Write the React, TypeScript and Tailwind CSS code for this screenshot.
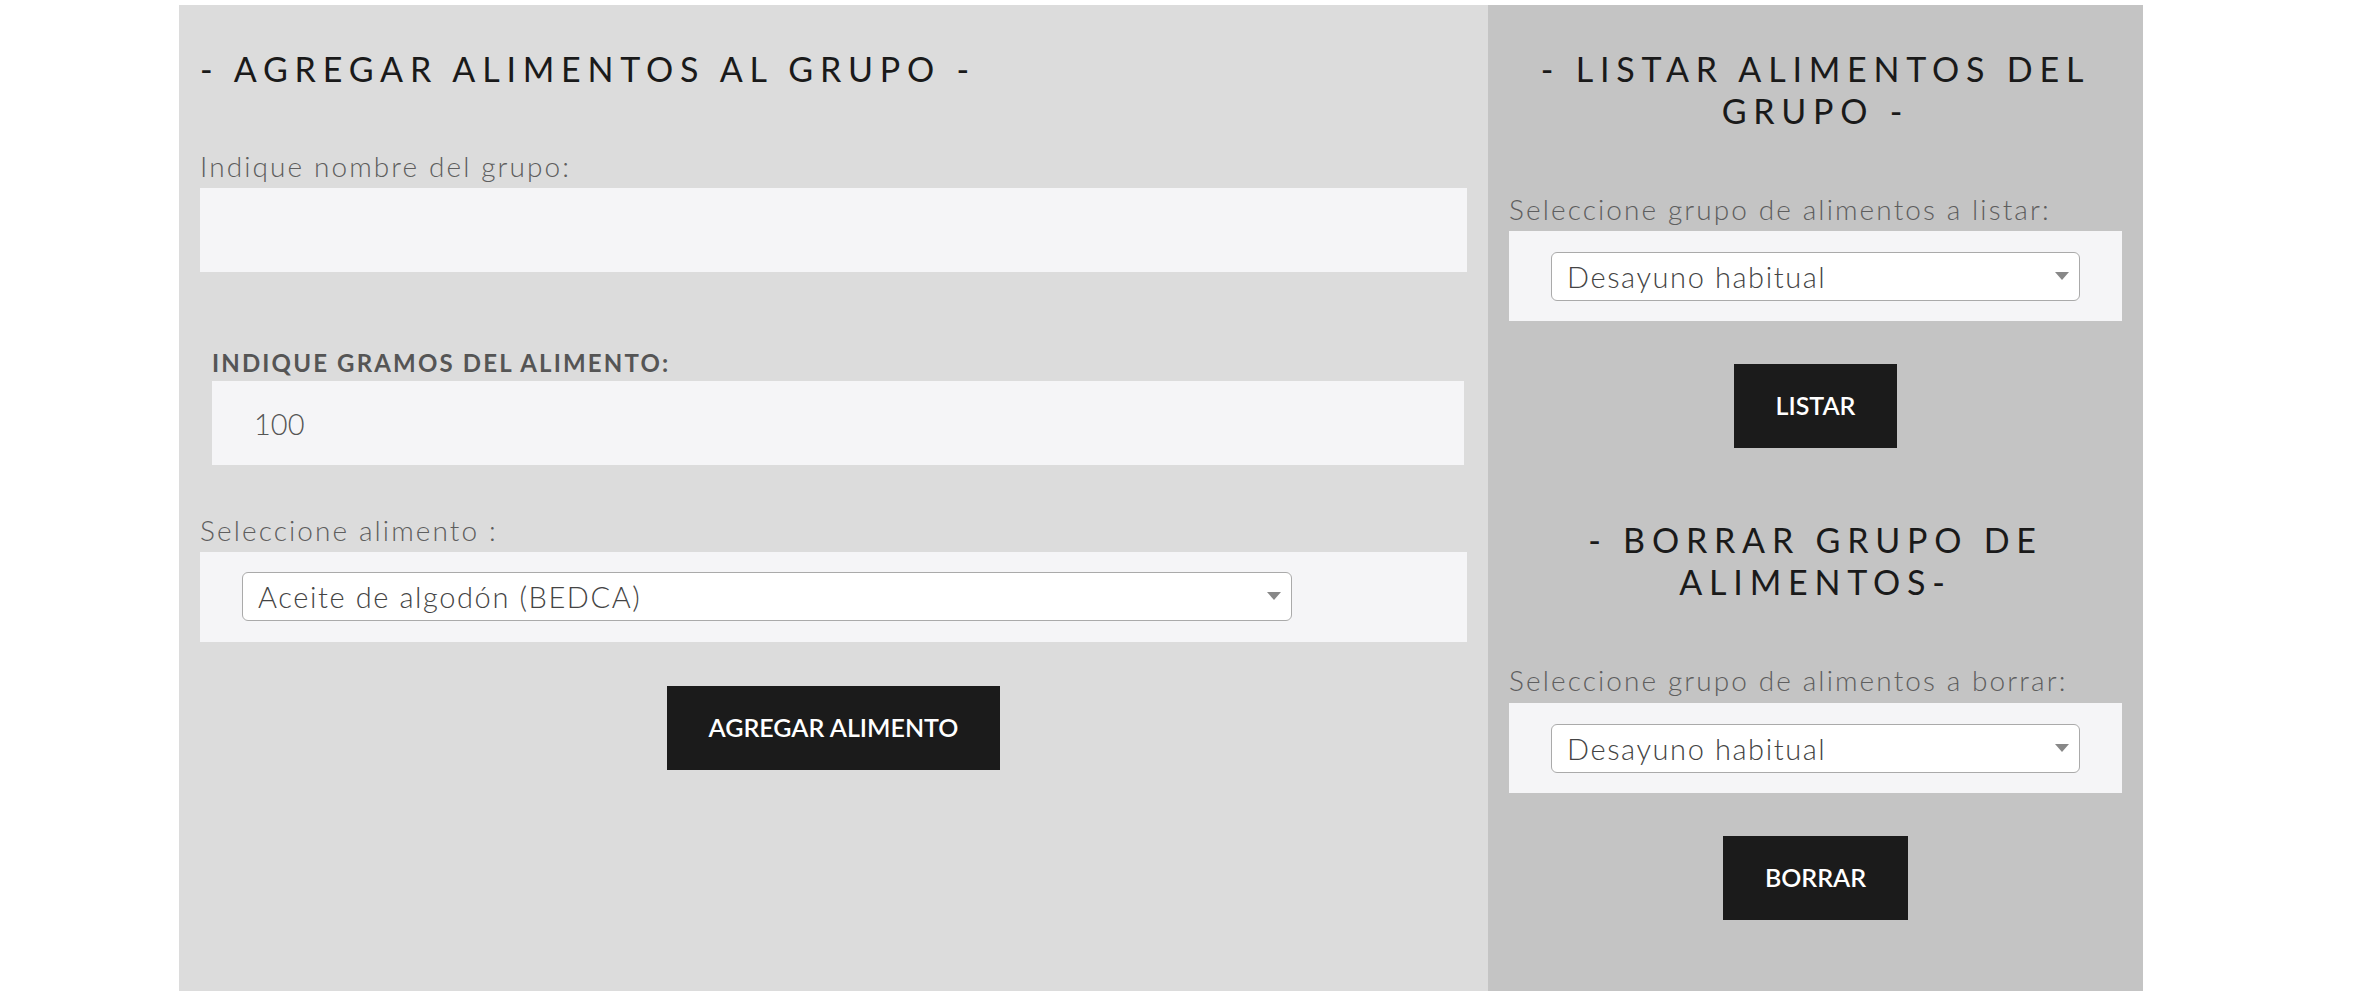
import React from 'react';

const font = { fontFamily: 'Lato, "Open Sans", sans-serif' };

function Heading({ children }: { children: React.ReactNode }) {
  return (
    <h2 className="text-[34px] leading-[42px] font-normal tracking-[0.2em] text-[#1a1a1a]">
      {children}
    </h2>
  );
}

function Label({ children, className = '' }: { children: React.ReactNode; className?: string }) {
  return <p className={`text-[28px] leading-[36px] font-light tracking-[0.075em] text-[#5e5e5e] ${className}`}>{children}</p>;
}

function Select({ value, className = '' }: { value: string; className?: string }) {
  return (
    <div className={`relative h-[49px] ${className}`}>
      <select
        defaultValue={value}
        className="h-full w-full appearance-none rounded-[6px] border border-[#aaa] bg-white pl-[15px] text-[29px] font-light tracking-[0.055em] text-[#444] outline-none"
        style={font}
      >
        <option>{value}</option>
      </select>
      {/* flecha del select */}
      <span className="pointer-events-none absolute right-[11px] top-[20px] h-0 w-0 border-x-[7px] border-t-[8px] border-x-transparent border-t-[#888]" />
    </div>
  );
}

function DarkButton({ children, className = '' }: { children: React.ReactNode; className?: string }) {
  return (
    <button className={`h-[84px] bg-[#1b1b1b] px-[42px] text-[25px] font-semibold text-white ${className}`}>
      {children}
    </button>
  );
}

export default function App() {
  return (
    <div className="min-h-screen bg-white pt-[5px]" style={font}>
      <div className="ml-[179px] flex h-[986px] w-[1964px]">
        {/* agregar alimentos */}
        <section className="flex w-[1309px] flex-col bg-[#dcdcdc] px-[21px] pt-[43px]">
          <Heading>- AGREGAR ALIMENTOS AL GRUPO -</Heading>

          <Label className="mt-[58px]">Indique nombre del grupo:</Label>
          <input className="mt-[4px] h-[84px] w-full bg-[#f5f5f7] px-[20px] text-[28px] outline-none" />

          <p className="ml-[12px] mt-[76px] text-[24px] leading-[30px] font-bold tracking-[0.09em] text-[#555]">
            INDIQUE GRAMOS DEL ALIMENTO:
          </p>
          <input
            defaultValue="100"
            className="ml-[12px] mr-[3px] mt-[3px] h-[84px] bg-[#f5f5f7] pl-[42px] text-[29px] font-light text-[#555] outline-none"
            style={font}
          />

          <Label className="mt-[47px]">Seleccione alimento :</Label>
          <div className="mt-[4px] h-[90px] bg-[#f5f5f7] pl-[42px] pt-[20px]">
            <Select value="Aceite de algodón (BEDCA)" className="w-[1050px]" />
          </div>

          <div className="mt-[44px] flex justify-center">
            <DarkButton className="h-[83px]">AGREGAR ALIMENTO</DarkButton>
          </div>
        </section>

        {/* listar / borrar */}
        <section className="flex w-[655px] flex-col bg-[#c4c4c4] px-[21px] pt-[43px] text-center">
          <Heading>
            - LISTAR ALIMENTOS DEL
            <br />
            GRUPO -
          </Heading>

          <Label className="mt-[59px] text-left">Seleccione grupo de alimentos a listar:</Label>
          <div className="mt-[4px] h-[90px] bg-[#f5f5f7] px-[42px] pt-[21px]">
            <Select value="Desayuno habitual" className="w-full" />
          </div>

          <div className="mt-[43px] flex justify-center">
            <DarkButton>LISTAR</DarkButton>
          </div>

          <div className="mt-[71px]">
            <Heading>
              - BORRAR GRUPO DE
              <br />
              ALIMENTOS-
            </Heading>
          </div>

          <Label className="mt-[59px] text-left">Seleccione grupo de alimentos a borrar:</Label>
          <div className="mt-[5px] h-[90px] bg-[#f5f5f7] px-[42px] pt-[21px]">
            <Select value="Desayuno habitual" className="w-full" />
          </div>

          <div className="mt-[43px] flex justify-center">
            <DarkButton className="h-[83px]">BORRAR</DarkButton>
          </div>
        </section>
      </div>
    </div>
  );
}
